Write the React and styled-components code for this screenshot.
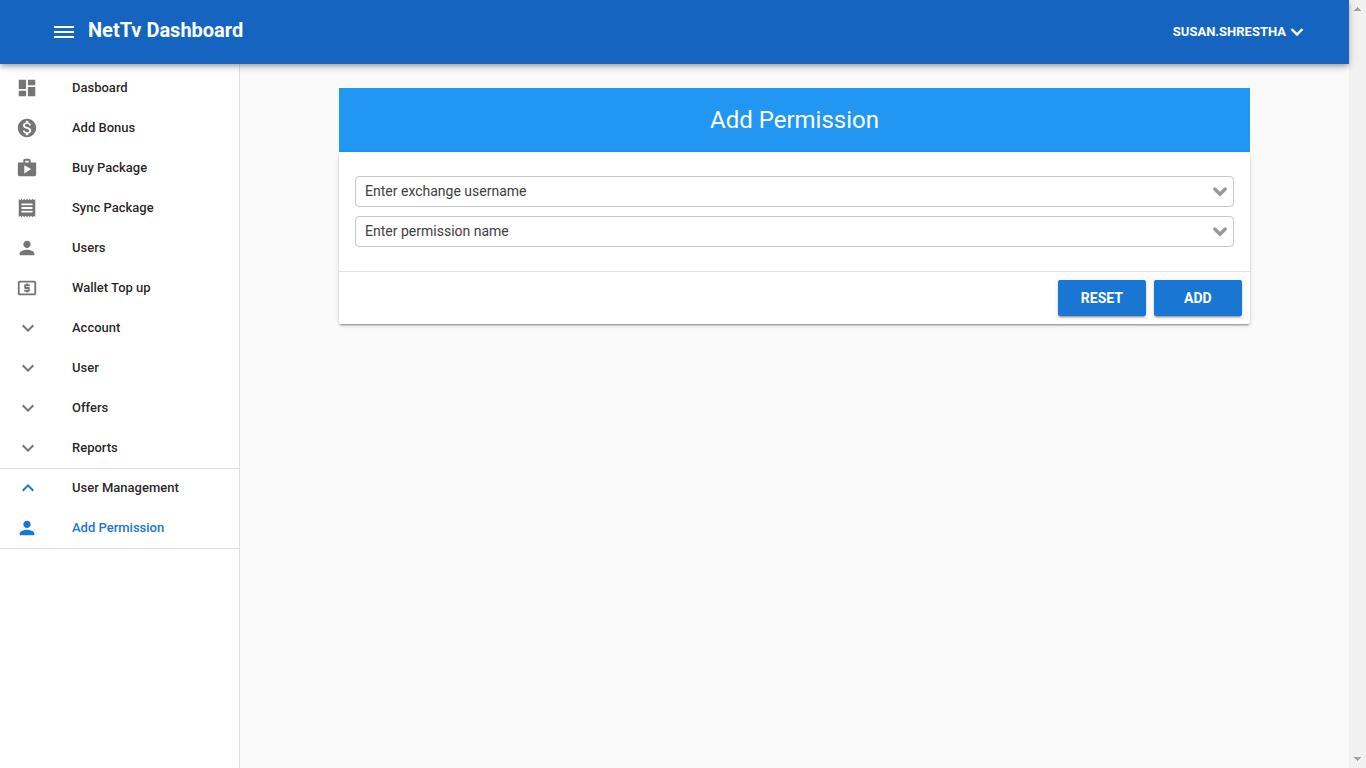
import React from "react";
import styled, { createGlobalStyle } from "styled-components";
import {
  MdDashboard,
  MdMonetizationOn,
  MdShop,
  MdReceipt,
  MdPerson,
  MdLocalAtm,
  MdExpandMore,
  MdExpandLess,
} from "react-icons/md";

const GlobalStyle = createGlobalStyle`
  *, *::before, *::after { box-sizing: border-box; }
  html, body { margin: 0; overflow: hidden; }
  body {
    font-family: Roboto, "Liberation Sans", sans-serif;
    font-size: 14px;
    line-height: 20px;
    color: rgba(0, 0, 0, 0.87);
    background: #fafafa;
  }
  button, select { font-family: inherit; }
`;

const Frame = styled.div`
  display: flex;
  height: 100vh;
`;

const Page = styled.div`
  flex: 1;
  min-width: 0;
  display: flex;
  flex-direction: column;
`;

const Header = styled.header`
  position: relative;
  z-index: 2;
  display: flex;
  align-items: center;
  justify-content: space-between;
  height: 64px;
  padding: 0 45px 0 54px;
  background: #1565c0;
  color: #fff;
  box-shadow: 0 2px 4px -1px rgba(0, 0, 0, 0.2),
    0 4px 5px 0 rgba(0, 0, 0, 0.14), 0 1px 10px 0 rgba(0, 0, 0, 0.12);
`;

const Brand = styled.div`
  display: flex;
  align-items: center;
  gap: 14px;
`;

const PlainButton = styled.button`
  display: flex;
  align-items: center;
  gap: 4px;
  padding: 0;
  border: 0;
  background: none;
  color: inherit;
  font-size: 13px;
  font-weight: 700;
  line-height: 20px;
  text-transform: uppercase;
  cursor: pointer;
`;

const Title = styled.h1`
  margin: 0;
  padding-bottom: 4px;
  font-size: 20px;
  font-weight: 700;
  line-height: 24px;
`;

const Body = styled.div`
  flex: 1;
  min-height: 0;
  display: flex;
`;

const Sidebar = styled.nav`
  flex: none;
  width: 240px;
  padding-top: 4px;
  background: #fff;
  border-right: 1px solid #e0e0e0;
`;

const NavList = styled.ul`
  margin: 0;
  padding: 0;
  list-style: none;
`;

const NavGroup = styled(NavList)`
  box-shadow: inset 0 1px 0 #e0e0e0;
  border-bottom: 1px solid #e0e0e0;
`;

const NavLink = styled.a`
  display: flex;
  align-items: center;
  height: 40px;
  padding: 0 16px;
  font-size: 13px;
  font-weight: 500;
  color: ${(p) => (p.$active ? "#1976d2" : "rgba(0, 0, 0, 0.87)")};
  text-decoration: none;
`;

const NavIcon = styled.span`
  flex: none;
  display: flex;
  width: 56px;
  font-size: ${(p) => (p.$chevron ? "24px" : "22px")};
  color: ${(p) => (p.$active ? "#1976d2" : "rgba(0, 0, 0, 0.54)")};
`;

const Content = styled.main`
  flex: 1;
  min-width: 0;
  display: grid;
  grid-template-columns: 1fr 10fr 1fr;
  align-items: start;
  padding: 24px 8px;
`;

const Panel = styled.section`
  grid-column: 2;
  min-width: 0;
`;

const PanelHeader = styled.h2`
  margin: 0;
  padding: 16px;
  background: #2196f3;
  color: #fff;
  font-size: 24px;
  font-weight: 400;
  line-height: 32px;
  text-align: center;
`;

const Card = styled.form`
  background: #fff;
  border-radius: 2px;
  box-shadow: 0 3px 1px -2px rgba(0, 0, 0, 0.2),
    0 2px 2px 0 rgba(0, 0, 0, 0.14), 0 1px 5px 0 rgba(0, 0, 0, 0.12);
`;

const Fields = styled.div`
  display: flex;
  flex-direction: column;
  gap: 9px;
  padding: 24px 16px;
`;

const Field = styled.div`
  display: grid;
  align-items: center;

  > * {
    grid-area: 1 / 1;
  }

  > svg {
    justify-self: end;
    margin-right: 7px;
    pointer-events: none;
  }
`;

const Select = styled.select`
  appearance: none;
  width: 100%;
  height: 31px;
  padding: 0 32px 1px 9px;
  border: 1px solid #c8c8c8;
  border-radius: 4px;
  background: #fff;
  color: #404040;
  font-size: 14px;
  line-height: 20px;
`;

const Actions = styled.div`
  display: flex;
  justify-content: flex-end;
  gap: 8px;
  padding: 8px;
  border-top: 1px solid #e0e0e0;
`;

const Button = styled.button`
  width: 88px;
  height: 36px;
  padding: 0;
  border: 0;
  border-radius: 2px;
  background: #1976d2;
  color: #fff;
  font-size: 14px;
  font-weight: 700;
  text-transform: uppercase;
  cursor: pointer;
  box-shadow: 0 3px 1px -2px rgba(0, 0, 0, 0.2),
    0 2px 2px 0 rgba(0, 0, 0, 0.14), 0 1px 5px 0 rgba(0, 0, 0, 0.12);
`;

const ScrollTrack = styled.div`
  flex: none;
  display: flex;
  flex-direction: column;
  justify-content: space-between;
  align-items: center;
  width: 17px;
  padding: 7px 0;
  background: #f1f1f1;
`;

const MenuIcon = () => (
  <svg width="20" height="12" viewBox="0 0 20 12" fill="currentColor" aria-hidden="true">
    <path d="M0 0h20v2H0zM0 5h20v2H0zM0 10h20v2H0z" />
  </svg>
);

const AccountChevron = () => (
  <svg width="14" height="10" viewBox="0 0 14 10" fill="none" aria-hidden="true">
    <path d="M1.5 2L7 7.5L12.5 2" stroke="currentColor" strokeWidth="2.4" />
  </svg>
);

const SelectChevron = () => (
  <svg width="14" height="10" viewBox="0 0 14 10" fill="none" aria-hidden="true">
    <path d="M1.8 2L7 7.3L12.2 2" stroke="#999" strokeWidth="3.4" strokeLinecap="round" />
  </svg>
);

const ScrollArrow = ({ down }) => (
  <svg width="7" height="4" viewBox="0 0 7 4" fill="#a3a3a3" shapeRendering="crispEdges" aria-hidden="true">
    <path d={down ? "M0 0h7v1H6v1H5v1H4v1H3V3H2V2H1V1H0z" : "M0 4h7V3H6V2H5V1H4V0H3v1H2v1H1v1H0z"} />
  </svg>
);

const items = [
  { label: "Dasboard", Icon: MdDashboard },
  { label: "Add Bonus", Icon: MdMonetizationOn },
  { label: "Buy Package", Icon: MdShop },
  { label: "Sync Package", Icon: MdReceipt },
  { label: "Users", Icon: MdPerson },
  { label: "Wallet Top up", Icon: MdLocalAtm },
  { label: "Account", Icon: MdExpandMore, chevron: true },
  { label: "User", Icon: MdExpandMore, chevron: true },
  { label: "Offers", Icon: MdExpandMore, chevron: true },
  { label: "Reports", Icon: MdExpandMore, chevron: true },
];

const openGroup = [
  { label: "User Management", Icon: MdExpandLess, chevron: true, activeIcon: true },
  { label: "Add Permission", Icon: MdPerson, active: true },
];

const NavItem = ({ label, Icon, chevron, active, activeIcon }) => (
  <li>
    <NavLink href="#" $active={active}>
      <NavIcon $chevron={chevron} $active={active || activeIcon}>
        <Icon aria-hidden="true" />
      </NavIcon>
      {label}
    </NavLink>
  </li>
);

const SelectField = ({ label, name }) => (
  <Field>
    <Select name={name} aria-label={label} defaultValue="">
      <option value="">{label}</option>
    </Select>
    <SelectChevron />
  </Field>
);

export default function App() {
  return (
    <>
      <GlobalStyle />
      <Frame>
        <Page>
          <Header>
            <Brand>
              <PlainButton type="button" aria-label="Toggle menu">
                <MenuIcon />
              </PlainButton>
              <Title>NetTv Dashboard</Title>
            </Brand>
            <PlainButton type="button">
              susan.shrestha
              <AccountChevron />
            </PlainButton>
          </Header>
          <Body>
            <Sidebar>
              <NavList>
                {items.map((item) => (
                  <NavItem key={item.label} {...item} />
                ))}
              </NavList>
              <NavGroup>
                {openGroup.map((item) => (
                  <NavItem key={item.label} {...item} />
                ))}
              </NavGroup>
            </Sidebar>
            <Content>
              <Panel>
                <PanelHeader>Add Permission</PanelHeader>
                <Card onSubmit={(e) => e.preventDefault()}>
                  <Fields>
                    <SelectField name="username" label="Enter exchange username" />
                    <SelectField name="permission" label="Enter permission name" />
                  </Fields>
                  <Actions>
                    <Button type="reset">Reset</Button>
                    <Button type="submit">Add</Button>
                  </Actions>
                </Card>
              </Panel>
            </Content>
          </Body>
        </Page>
        <ScrollTrack aria-hidden="true">
          <ScrollArrow />
          <ScrollArrow down />
        </ScrollTrack>
      </Frame>
    </>
  );
}
